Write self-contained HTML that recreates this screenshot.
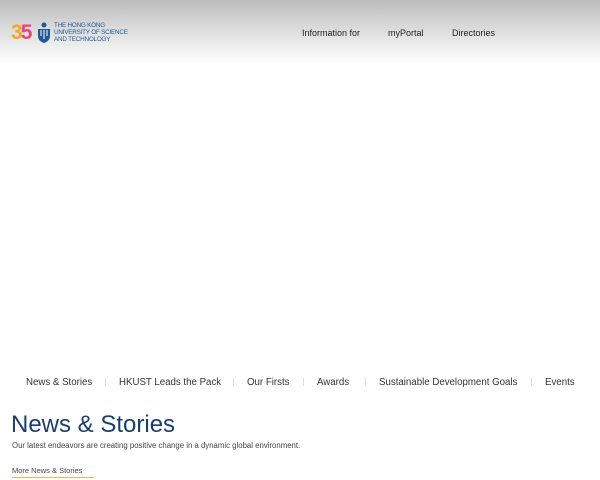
<!DOCTYPE html>
<html><head><meta charset="utf-8"><style>
*{margin:0;padding:0;box-sizing:border-box}
body{width:600px;height:480px;overflow:hidden;background:#fff;font-family:"Liberation Sans",sans-serif;position:relative}
.hdr{position:absolute;left:0;top:0;width:600px;height:66px;background:linear-gradient(#bcbcbc,#d9d9d9 40%,#f4f4f4 80%,#fff)}
.t{position:absolute;white-space:nowrap}
.nav{font-size:9px;color:#222;top:28px}
.tab{font-size:9.7px;color:#333;top:377px}
.sep{position:absolute;top:378px;width:1px;height:8px;background:#ddd}
</style></head><body>
<div class="hdr"></div>
<div class="t" style="left:11px;top:20px;font-size:21px;font-weight:bold;letter-spacing:-2px;line-height:26px"><span style="color:#f5a623">3</span><span style="color:#e8457a">5</span></div>
<svg class="t" style="left:37px;top:22px" width="14" height="22" viewBox="0 0 14 22"><circle cx="7" cy="3" r="2.5" fill="#1f5a96"/><path d="M1 7h12v7c0 4-3 6-6 7-3-1-6-3-6-7z" fill="#1f5a96"/><path d="M4 8v6M7 8v9M10 8v6" stroke="#fff" stroke-width="1"/></svg>
<div class="t" style="left:54px;top:23px;font-size:6.3px;line-height:6.8px;color:#1f5a96;letter-spacing:-0.2px">THE HONG KONG<br>UNIVERSITY OF SCIENCE<br>AND TECHNOLOGY</div>
<div class="t nav" style="left:302px">Information for</div>
<div class="t nav" style="left:388px">myPortal</div>
<div class="t nav" style="left:452px">Directories</div>
<div class="t tab" style="left:26px">News &amp; Stories</div>
<div class="sep" style="left:105px"></div>
<div class="t tab" style="left:119px">HKUST Leads the Pack</div>
<div class="sep" style="left:233px"></div>
<div class="t tab" style="left:247px">Our Firsts</div>
<div class="sep" style="left:303px"></div>
<div class="t tab" style="left:317px">Awards</div>
<div class="sep" style="left:365px"></div>
<div class="t tab" style="left:379px">Sustainable Development Goals</div>
<div class="sep" style="left:531px"></div>
<div class="t tab" style="left:545px">Events</div>
<div class="t" style="left:11px;top:411px;font-size:24px;color:#1a3f6e">News &amp; Stories</div>
<div class="t" style="left:12px;top:441px;font-size:7.8px;color:#444">Our latest endeavors are creating positive change in a dynamic global environment.</div>
<div class="t" style="left:12px;top:466px;font-size:7.5px;color:#444">More News &amp; Stories</div>
<div class="t" style="left:12px;top:477px;width:82px;height:1px;background:#e3b65c"></div>
</body></html>
